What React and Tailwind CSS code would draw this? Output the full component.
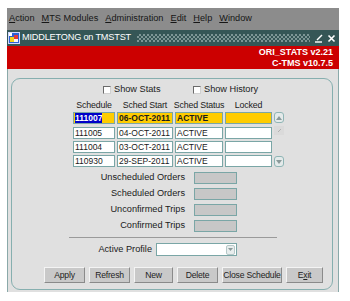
import React from "react";

const menus = [
  { u: "A", rest: "ction" },
  { u: "M", rest: "TS Modules" },
  { u: "A", rest: "dministration" },
  { u: "E", rest: "dit" },
  { u: "H", rest: "elp" },
  { u: "W", rest: "indow" },
];

const rows = [
  { id: "111007", start: "06-OCT-2011", status: "ACTIVE", current: true },
  { id: "111005", start: "04-OCT-2011", status: "ACTIVE" },
  { id: "111004", start: "03-OCT-2011", status: "ACTIVE" },
  { id: "110930", start: "29-SEP-2011", status: "ACTIVE" },
];

const stats = ["Unscheduled Orders", "Scheduled Orders", "Unconfirmed Trips", "Confirmed Trips"];

function Checkbox({ label, width }) {
  return (
    <div className={`flex items-center ${width}`}>
      <span className="w-[8px] h-[8px] bg-white border border-t-[#6b6b6b] border-l-[#6b6b6b] border-b-[#d0d0d0] border-r-[#d0d0d0]" />
      <span className="ml-[3px] whitespace-nowrap">{label}</span>
    </div>
  );
}

function Btn({ children, w }) {
  return (
    <button className={`${w} h-[16px] bg-[#c9c9c9] border border-t-[#f4f4f4] border-l-[#f4f4f4] border-b-[#8a8a8a] border-r-[#8a8a8a] text-[#222] text-[8.6px] tracking-[-0.2px] leading-[14px] whitespace-nowrap flex items-center justify-center`}>
      {children}
    </button>
  );
}

export default function App() {
  return (
    <div className="w-[350px] h-[301px] bg-white pt-[8px] pl-[7px] font-['Liberation_Sans',Arial,sans-serif] text-[9.2px] text-[#1a1a1a] overflow-hidden">
      <div className="w-[332px] flex flex-col">
        {/* Menu bar */}
        <div className="h-[22px] bg-[#8c8c8c] flex items-center gap-[7px] pl-[2px] text-[#161616] text-[9.2px]">
          {menus.map((m, i) => (
            <span key={i}>
              <span className="underline underline-offset-[1px]">{m.u}</span>
              {m.rest}
            </span>
          ))}
        </div>

        {/* Title bar */}
        <div className="h-[16px] bg-[#355656] flex items-center pl-[1px] pr-[3px] text-white">
          <svg width="12" height="12" viewBox="0 0 12 12" className="shrink-0">
            <rect x="0.5" y="0.5" width="11" height="11" fill="#2a5fd6" stroke="#cfd8ff" strokeWidth="1" />
            <rect x="2" y="5" width="4" height="5" fill="#f2d21c" />
            <rect x="6" y="3" width="4" height="4" fill="#e23a3a" />
            <rect x="6" y="7" width="4" height="3" fill="#f5f5f5" />
            <rect x="1" y="1" width="3" height="3" fill="#ffffff" />
          </svg>
          <span className="ml-[2px] whitespace-nowrap tracking-[-0.2px]">MIDDLETONG on TMSTST</span>
          <div className="ml-[6px] flex-1 h-[8px] bg-[image:repeating-conic-gradient(#7d9595_0_25%,transparent_0_50%)] bg-[length:4px_4px]" />
          <svg width="9" height="9" viewBox="0 0 9 9" className="ml-[4px] shrink-0">
            <path d="M1 8 H8" stroke="#fff" strokeWidth="1.4" />
            <path d="M3 6 L8 1" stroke="#fff" strokeWidth="1.4" />
          </svg>
          <svg width="9" height="9" viewBox="0 0 9 9" className="ml-[4px] shrink-0">
            <path d="M1.5 1.5 L7.5 7.5 M7.5 1.5 L1.5 7.5" stroke="#fff" strokeWidth="1.6" />
          </svg>
        </div>

        {/* Red banner */}
        <div className="h-[23px] bg-[#cc0000] flex flex-col items-end justify-center pr-[6px] text-white font-bold text-[9px] leading-[11px]">
          <span>ORI_STATS v2.21</span>
          <span>C-TMS v10.7.5</span>
        </div>

        {/* Content */}
        <div className="h-[223px] bg-[#e0e0e0] border-l border-r border-[#8aa9a9] pt-[9px] pl-[3px] pr-[5px]">
          <div className="h-[212px] border border-[#86afaf] rounded-[9px] flex flex-col">
            {/* checkboxes */}
            <div className="mt-[6px] h-[10px] flex items-center ml-[91px]">
              <Checkbox label="Show Stats" width="w-[90px]" />
              <Checkbox label="Show History" width="" />
            </div>

            {/* header */}
            <div className="mt-[4px] h-[12px] leading-[12px] ml-[61px] grid grid-cols-[42px_56px_48px_47px] gap-x-[2px] text-center text-[8.8px] tracking-[-0.15px] whitespace-nowrap">
              <span className="flex justify-center">Schedule</span>
              <span className="flex justify-center">Sched Start</span>
              <span className="flex justify-center">Sched Status</span>
              <span className="flex justify-center">Locked</span>
            </div>

            {/* table */}
            <div className="mt-[1px] ml-[61px] flex gap-x-[2px]">
              <div className="flex flex-col">
                {rows.map((r, i) => (
                  <div
                    key={r.id}
                    className={`grid grid-cols-[42px_56px_48px_47px] gap-x-[2px] h-[12px] ${i === 0 ? "" : i === 1 ? "mt-[3px]" : "mt-[2px]"}`}
                  >
                    {[r.id, r.start, r.status, ""].map((v, j) => (
                      <div
                        key={j}
                        className={`border border-[#7aa6a6] px-[1px] text-[8.5px] leading-[10px] whitespace-nowrap overflow-hidden ${r.current ? "bg-[#ffcc00] font-bold" : "bg-white"}`}
                      >
                        {r.current && j === 0 ? (
                          <span className="bg-[#0000c8] text-white">{v}</span>
                        ) : (
                          v
                        )}
                      </div>
                    ))}
                  </div>
                ))}
              </div>
              {/* scrollbar */}
              <div className="w-[10px] flex flex-col">
                <div className="h-[11px] rounded-[3px] border border-[#8fb5b5] bg-[#e4eaea] flex items-center justify-center">
                  <svg width="6" height="4" viewBox="0 0 6 4"><path d="M0 4 L3 0 L6 4 Z" fill="#8a9a9a" /></svg>
                </div>
                <div className="mt-[3px] h-[9px] bg-[#dadada] flex items-center justify-center">
                  <svg width="5" height="5" viewBox="0 0 5 5"><path d="M1 4 L4 1" stroke="#b0b0b0" strokeWidth="1" /></svg>
                </div>
                <div className="flex-1" />
                <div className="h-[11px] rounded-[3px] border border-[#8fb5b5] bg-[#e4eaea] flex items-center justify-center">
                  <svg width="6" height="4" viewBox="0 0 6 4"><path d="M0 0 L3 4 L6 0 Z" fill="#8a9a9a" /></svg>
                </div>
              </div>
            </div>

            {/* stats */}
            <div className="mt-[5px] flex flex-col gap-[4px]">
              {stats.map((s) => (
                <div key={s} className="h-[12px] flex items-center">
                  <span className="w-[173px] text-right">{s}</span>
                  <span className="ml-[9px] w-[43px] h-[12px] bg-[#c7c7c7] border border-[#7aa6a6]" />
                </div>
              ))}
            </div>

            {/* separator */}
            <div className="mt-[5px] ml-[57px] w-[208px] h-px bg-[#9a9a9a]" />

            {/* active profile */}
            <div className="mt-[5px] h-[13px] flex items-center">
              <span className="w-[140px] text-right">Active Profile</span>
              <div className="ml-[4px] w-[81px] h-[13px] bg-white border border-[#7aa6a6] flex justify-end items-center pr-px">
                <div className="w-[9px] h-[10px] rounded-[2px] bg-[#e8eded] border border-[#b5c8c8] flex items-center justify-center">
                  <svg width="5" height="3" viewBox="0 0 5 3"><path d="M0 0 L2.5 3 L5 0 Z" fill="#8a9a9a" /></svg>
                </div>
              </div>
            </div>

            {/* buttons */}
            <div className="mt-[11px] ml-[32px] flex gap-[4px]">
              <Btn w="w-[41px]">Apply</Btn>
              <Btn w="w-[41px]">Refresh</Btn>
              <Btn w="w-[39px]">New</Btn>
              <Btn w="w-[41px]">Delete</Btn>
              <Btn w="w-[60px]">Close Schedule</Btn>
              <Btn w="w-[37px]">
                <span>E<span className="underline underline-offset-[1px]">x</span>it</span>
              </Btn>
            </div>
          </div>
        </div>
      </div>
    </div>
  );
}
